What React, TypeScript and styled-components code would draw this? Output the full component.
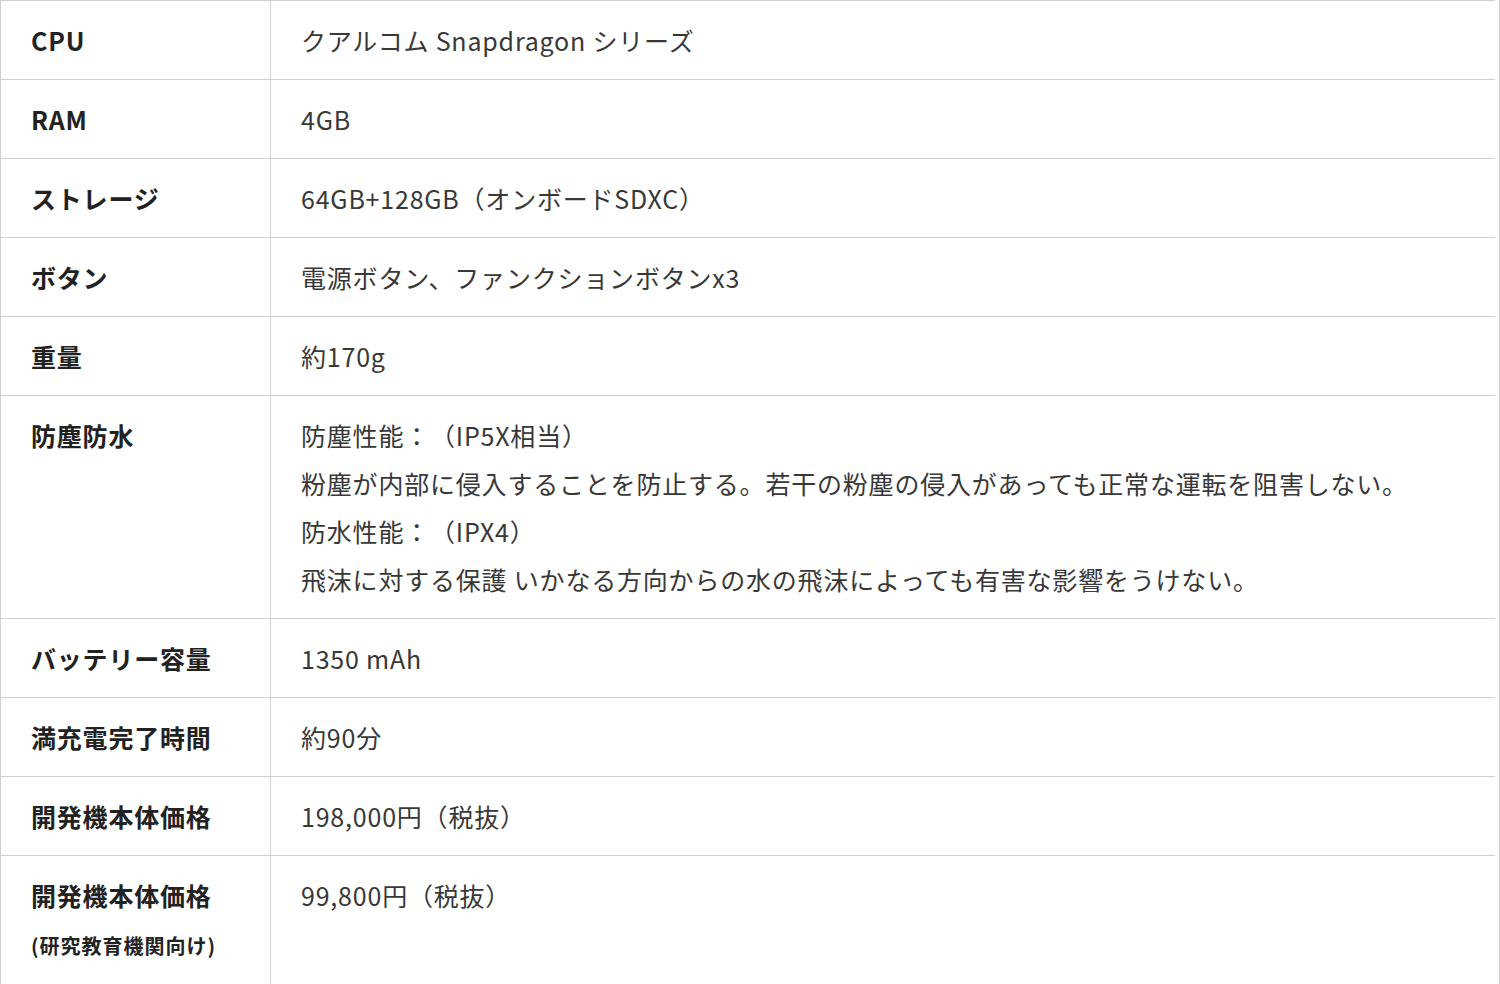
import React from "react"
import styled, { createGlobalStyle } from "styled-components";

const GlobalStyle = createGlobalStyle`
    html, body {
        margin: 0;
        padding: 0;
        background: #FFF;
    }
    body {
        font-family: "Noto Sans CJK JP", "Noto Sans", sans-serif;
    }
`

const PaginaEstilizada = styled.div`
    width: 1500px;
    min-height: 984px;
    box-sizing: border-box;
    border-right: 1px solid #D0D0D0;
`

const TabelaEstilizada = styled.div`
    width: 1494px;
    border-left: 1px solid #D0D0D0;
    border-top: 1px solid #D0D0D0;
    border-bottom: 1px solid #D0D0D0;
`

const LinhaEstilizada = styled.div`
    display: grid;
    grid-template-columns: 270px 1fr;
`

const CelulaBase = styled.div`
    box-sizing: border-box;
    padding: 15px 30px;
    border-bottom: 1px solid #D0D0D0;
    font-size: 25px;
    line-height: 48px;
    letter-spacing: 0.8px;
    text-spacing-trim: space-all;
`

const RotuloEstilizado = styled(CelulaBase)`
    border-right: 1px solid #D0D0D0;
    font-weight: 700;
    color: #222;
`

const ValorEstilizado = styled(CelulaBase)`
    color: #383838;
    font-weight: 400;
`

const LinhaTexto = styled.p`
    margin: 0;
`

const Observacao = styled.span`
    font-size: 20px;
    letter-spacing: 1px;
`

interface Especificacao {
    rotulo: React.ReactNode
    valor: React.ReactNode
}

const especificacoes: Especificacao[] = [
    { rotulo: "CPU", valor: "クアルコム Snapdragon シリーズ" },
    { rotulo: "RAM", valor: "4GB" },
    { rotulo: "ストレージ", valor: "64GB+128GB（オンボードSDXC）" },
    { rotulo: "ボタン", valor: "電源ボタン、ファンクションボタンx3" },
    { rotulo: "重量", valor: "約170g" },
    {
        rotulo: "防塵防水",
        valor: (
            <>
                <LinhaTexto>防塵性能：（IP5X相当）</LinhaTexto>
                <LinhaTexto>粉塵が内部に侵入することを防止する。若干の粉塵の侵入があっても正常な運転を阻害しない。</LinhaTexto>
                <LinhaTexto>防水性能：（IPX4）</LinhaTexto>
                <LinhaTexto>飛沫に対する保護 いかなる方向からの水の飛沫によっても有害な影響をうけない。</LinhaTexto>
            </>
        ),
    },
    { rotulo: "バッテリー容量", valor: "1350 mAh" },
    { rotulo: "満充電完了時間", valor: "約90分" },
    { rotulo: "開発機本体価格", valor: "198,000円（税抜）" },
    {
        rotulo: (
            <>
                開発機本体価格<br />
                <Observacao>(研究教育機関向け)</Observacao>
            </>
        ),
        valor: "99,800円（税抜）",
    },
]

export default function App() {
    return (
        <PaginaEstilizada>
            <GlobalStyle />
            <TabelaEstilizada>
                {especificacoes.map((item, i) => (
                    <LinhaEstilizada key={i}>
                        <RotuloEstilizado>{item.rotulo}</RotuloEstilizado>
                        <ValorEstilizado>{item.valor}</ValorEstilizado>
                    </LinhaEstilizada>
                ))}
            </TabelaEstilizada>
        </PaginaEstilizada>
    )
}
